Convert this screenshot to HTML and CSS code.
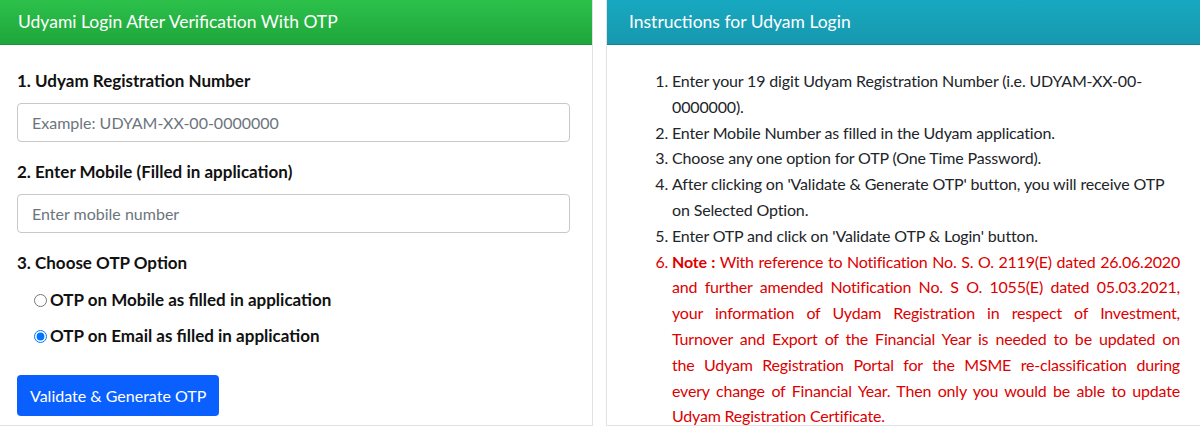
FILE: index.html
```html
<!DOCTYPE html>
<html>
  <head>
    <title>Udyam Login</title>
    <link rel="stylesheet" href="styles.css">
  </head>
  <body>
    <div class="row">
      <div class="card card-login">
        <div class="card-head head-green">Udyami Login After Verification With OTP</div>
        <div class="card-body">
          <label class="lbl">1. Udyam Registration Number</label>
          <input class="field" type="text" placeholder="Example: UDYAM-XX-00-0000000">
          <label class="lbl">2. Enter Mobile (Filled in application)</label>
          <input class="field" type="text" placeholder="Enter mobile number">
          <label class="lbl">3. Choose OTP Option</label>
          <div class="opts">
            <label class="opt"><input type="radio" name="otp">OTP on Mobile as filled in application</label>
            <label class="opt"><input type="radio" name="otp" checked>OTP on Email as filled in application</label>
          </div>
          <button class="btn">Validate &amp; Generate OTP</button>
        </div>
      </div>
      <div class="card card-info">
        <div class="card-head head-teal">Instructions for Udyam Login</div>
        <div class="card-body">
          <ol class="steps">
            <li>Enter your 19 digit Udyam Registration Number (i.e. UDYAM-XX-00-0000000).</li>
            <li>Enter Mobile Number as filled in the Udyam application.</li>
            <li>Choose any one option for OTP (One Time Password).</li>
            <li>After clicking on 'Validate &amp; Generate OTP' button, you will receive OTP on Selected Option.</li>
            <li>Enter OTP and click on 'Validate OTP &amp; Login' button.</li>
            <li class="note">
              <span class="ln"><b>Note :</b> With reference to Notification No. S. O. 2119(E) dated 26.06.2020</span>
              <span class="ln">and further amended Notification No. S O. 1055(E) dated 05.03.2021,</span>
              <span class="ln">your information of Uydam Registration in respect of Investment,</span>
              <span class="ln">Turnover and Export of the Financial Year is needed to be updated on</span>
              <span class="ln">the Udyam Registration Portal for the MSME re-classification during</span>
              <span class="ln">every change of Financial Year. Then only you would be able to update</span>
              Udyam Registration Certificate.
            </li>
          </ol>
        </div>
      </div>
    </div>
  </body>
</html>
```

FILE: styles.css
```css
body{
  margin: 0;
  background: #fff;
  font-family: Lato, "Noto Sans", sans-serif;
  color: #212529;
  overflow: hidden;
}
.row{
  display: flex;
  gap: 13px;
  height: 426px;
}
.card{
  background: #fff;
  border: 1px solid #e2e2e2;
  border-top: 0;
  box-sizing: border-box;
}
.card-login{
  width: 593px;
  border-left: 0;
}
.card-info{
  flex: 1;
  border-right: 0;
}
.card-head{
  height: 45px;
  box-sizing: border-box;
  padding: 11px 18px 0;
  font-size: 17.5px;
  color: #fff;
}
.head-green{
  background: linear-gradient(#2cc14b, #1fa63b);
  border-bottom: 1px solid #1b9233;
}
.head-teal{
  padding-left: 22px;
  background: linear-gradient(#17a9c1, #1798ae);
  border-bottom: 1px solid #137f92;
}
.card-login .card-body{
  padding: 26px 22px 0 17px;
  display: flex;
  flex-direction: column;
  align-items: flex-start;
}
.lbl{
  font-weight: bold;
  font-size: 17px;
  line-height: 20px;
  margin-bottom: 12px;
  color: #111;
}
.field{
  width: 100%;
  height: 39px;
  box-sizing: border-box;
  border: 1px solid #c8c8c8;
  border-radius: 4px;
  padding: 0 14px;
  font-family: inherit;
  font-size: 16px;
  margin-bottom: 20px;
}
.field::placeholder{
  color: #6c757d;
}
.opts{
  padding-left: 17px;
  display: flex;
  flex-direction: column;
  gap: 16px;
  margin-top: 5px;
}
.opt{
  display: flex;
  align-items: center;
  font-weight: bold;
  font-size: 17px;
  line-height: 20px;
  color: #111;
}
.opt input{
  margin: 0 3px 0 0;
  width: 13px;
  height: 13px;
}
.btn{
  margin-top: 29px;
  height: 41px;
  padding: 0 13px;
  background: #0a60ff;
  color: #fff;
  border: 0;
  border-radius: 4px;
  font-family: inherit;
  font-size: 16px;
}
.card-info .card-body{
  padding: 23px 20px 0 0;
}
.steps{
  margin: 0;
  padding-left: 65px;
  font-size: 16px;
  line-height: 25.8px;
  letter-spacing: -0.15px;
}
.note{
  color: #dd0000;
  letter-spacing: -0.2px;
}
.note .ln{
  display: block;
  text-align: justify;
  text-align-last: justify;
}
```
